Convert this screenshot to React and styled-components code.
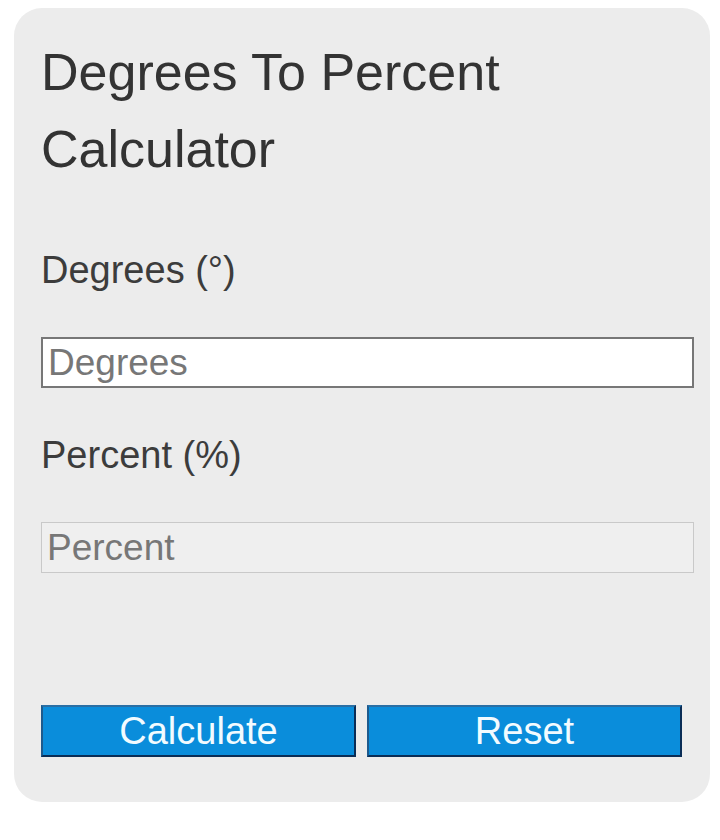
import React, { useState } from 'react';
import styled, { createGlobalStyle } from 'styled-components';

const GlobalStyle = createGlobalStyle`
  html, body {
    margin: 0;
    padding: 0;
    background: #ffffff;
  }
  body {
    font-family: "Liberation Sans", Arial, sans-serif;
  }
`;

const Page = styled.div`
  padding: 8px 10px 0 14px;
`;

const Card = styled.form`
  box-sizing: border-box;
  width: 696px;
  height: 794px;
  background: #ececec;
  border-radius: 28px;
  padding: 26px 16px 0 27px;
  display: flex;
  flex-direction: column;
`;

const Title = styled.h1`
  margin: 0 0 60px;
  font-size: 52px;
  line-height: 77px;
  font-weight: 400;
  color: #333;
`;

const Label = styled.label`
  display: block;
  font-size: 38px;
  line-height: 44px;
  color: #3c3c3c;
  margin-bottom: 45px;
`;

const Field = styled.input`
  box-sizing: border-box;
  width: 653px;
  height: 51px;
  margin: 0 0 45px;
  padding: 0 5px;
  font-family: inherit;
  font-size: 37px;
  color: #333;
  background: ${p => (p.readOnly ? '#efefef' : '#ffffff')};
  border: ${p => (p.readOnly ? '1px solid #c9c9c9' : '2px solid #777')};
  border-radius: 0;
  outline: none;

  &::placeholder {
    color: #777;
  }
`;

const Buttons = styled.div`
  display: flex;
  gap: 11px;
  margin-top: 87px;
`;

const Button = styled.button`
  width: 315px;
  height: 52px;
  padding: 0;
  background: #0a8ddb;
  color: #f2fbff;
  font-family: inherit;
  font-size: 38px;
  border: 2px solid #0a2d56;
  border-top-color: #2a6fa4;
  border-left-color: #1d5a8d;
  cursor: pointer;
`;

const App = () => {
  const [degrees, setDegrees] = useState('');
  const [percent, setPercent] = useState('');

  const calculate = () => {
    const d = parseFloat(degrees);
    if (isNaN(d)) return;
    setPercent((Math.tan((d * Math.PI) / 180) * 100).toFixed(2));
  };

  const reset = () => {
    setDegrees('');
    setPercent('');
  };

  return (
    <Page>
      <GlobalStyle />
      <Card onSubmit={e => e.preventDefault()}>
        <Title>Degrees To Percent Calculator</Title>
        <Label htmlFor="degrees">Degrees (°)</Label>
        <Field
          id="degrees"
          type="text"
          placeholder="Degrees"
          value={degrees}
          onChange={e => setDegrees(e.target.value)}
        />
        <Label htmlFor="percent">Percent (%)</Label>
        <Field id="percent" type="text" placeholder="Percent" value={percent} readOnly />
        <Buttons>
          <Button type="button" onClick={calculate}>Calculate</Button>
          <Button type="button" onClick={reset}>Reset</Button>
        </Buttons>
      </Card>
    </Page>
  );
};

export default App;
